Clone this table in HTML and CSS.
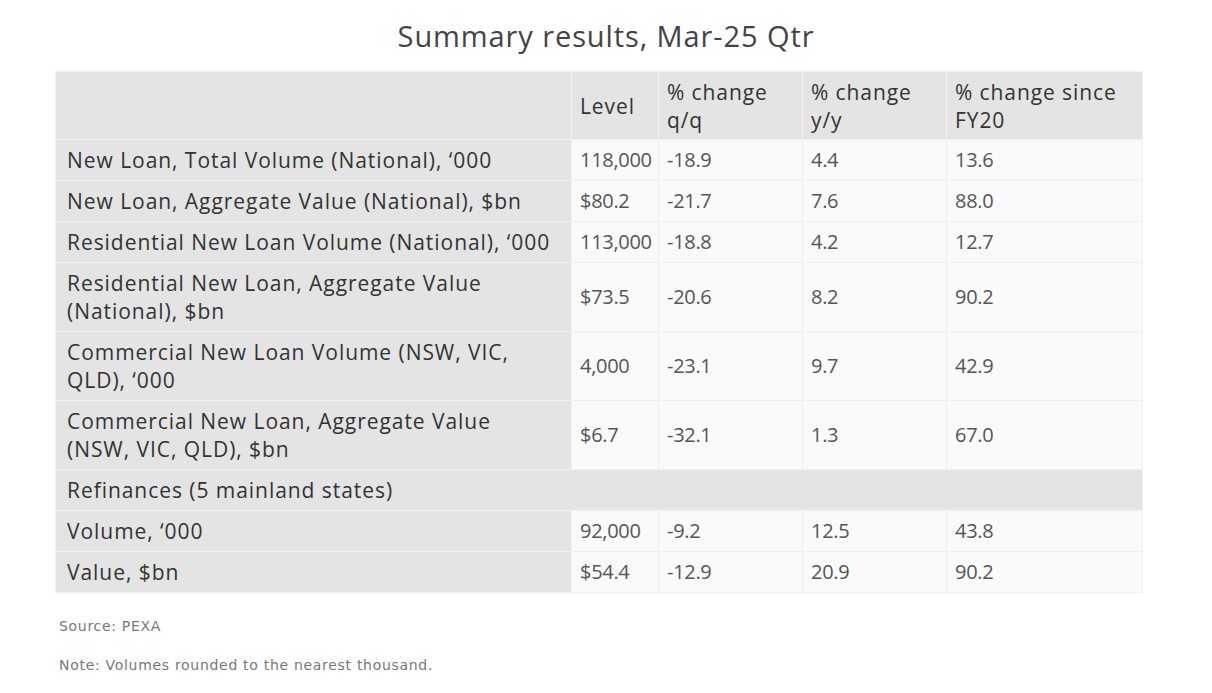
FILE: index.html
```html
<!DOCTYPE html>
<html>
<head>
<meta charset="utf-8">
<link rel="stylesheet" href="styles.css">
</head>
<body>
<div class="page">
  <h1 class="title">Summary results, Mar-25 Qtr</h1>
  <table class="summary">
    <colgroup>
      <col class="c-label"><col class="c-level"><col class="c-qq"><col class="c-yy"><col class="c-fy">
    </colgroup>
    <thead>
      <tr>
        <th class="lab"></th>
        <th>Level</th>
        <th>% change<br>q/q</th>
        <th>% change<br>y/y</th>
        <th>% change since<br>FY20</th>
      </tr>
    </thead>
    <tbody>
      <tr><td class="lab">New Loan, Total Volume (National), ‘000</td><td>118,000</td><td>-18.9</td><td>4.4</td><td>13.6</td></tr>
      <tr><td class="lab">New Loan, Aggregate Value (National), $bn</td><td>$80.2</td><td>-21.7</td><td>7.6</td><td>88.0</td></tr>
      <tr><td class="lab">Residential New Loan Volume (National), ‘000</td><td>113,000</td><td>-18.8</td><td>4.2</td><td>12.7</td></tr>
      <tr><td class="lab">Residential New Loan, Aggregate Value<br>(National), $bn</td><td>$73.5</td><td>-20.6</td><td>8.2</td><td>90.2</td></tr>
      <tr><td class="lab">Commercial New Loan Volume (NSW, VIC,<br>QLD), ‘000</td><td>4,000</td><td>-23.1</td><td>9.7</td><td>42.9</td></tr>
      <tr><td class="lab">Commercial New Loan, Aggregate Value<br>(NSW, VIC, QLD), $bn</td><td>$6.7</td><td>-32.1</td><td>1.3</td><td>67.0</td></tr>
      <tr class="section"><td class="lab" colspan="5">Refinances (5 mainland states)</td></tr>
      <tr><td class="lab">Volume, ‘000</td><td>92,000</td><td>-9.2</td><td>12.5</td><td>43.8</td></tr>
      <tr><td class="lab">Value, $bn</td><td>$54.4</td><td>-12.9</td><td>20.9</td><td>90.2</td></tr>
    </tbody>
  </table>
  <p class="note">Source: PEXA</p>
  <p class="note">Note: Volumes rounded to the nearest thousand.</p>
</div>
</body>
</html>
```

FILE: styles.css
```css
html, body {
  margin: 0;
  padding: 0;
  background: #ffffff;
}
.page {
  width: 1212px;
  font-family: "Open Sans", "Noto Sans", sans-serif;
  color: #333333;
}
.title {
  margin: 0;
  padding-top: 17px;
  height: 71px;
  box-sizing: border-box;
  text-align: center;
  font-weight: 400;
  font-size: 29px;
  line-height: 38px;
  letter-spacing: 0.9px;
  color: #444444;
}
.summary {
  margin-left: 55px;
  border-collapse: separate;
  border-spacing: 1px;
  table-layout: fixed;
  width: 1087px;
  font-size: 21px;
  line-height: 28px;
  background: #f1f1f1;
}
.c-label { width: 515px; }
.c-level { width: 86px; }
.c-qq { width: 143px; }
.c-yy { width: 143px; }
.c-fy { width: 195px; }
.summary th {
  background: #e4e4e4;
  font-weight: 400;
  text-align: left;
  vertical-align: middle;
  padding: 6px 8px 5px 8px;
  color: #333333;
  letter-spacing: 0.9px;
}
.summary td {
  background: #fafafa;
  padding: 6px 8px 6px 8px;
  vertical-align: middle;
  color: #555555;
  font-size: 20px;
  font-weight: 400;
  white-space: nowrap;
  letter-spacing: -0.3px;
}
.summary td.lab {
  background: #e4e4e4;
  color: #333333;
  font-size: 21px;
  padding-left: 11px;
  letter-spacing: 0.95px;
}
.note {
  margin: 0;
  padding-left: 59px;
  font-family: "DejaVu Sans", sans-serif;
  font-size: 14px;
  color: #777777;
  line-height: 20px;
  letter-spacing: 0.7px;
}
.summary + .note { margin-top: 23px; }
.note + .note { margin-top: 19px; }
```
